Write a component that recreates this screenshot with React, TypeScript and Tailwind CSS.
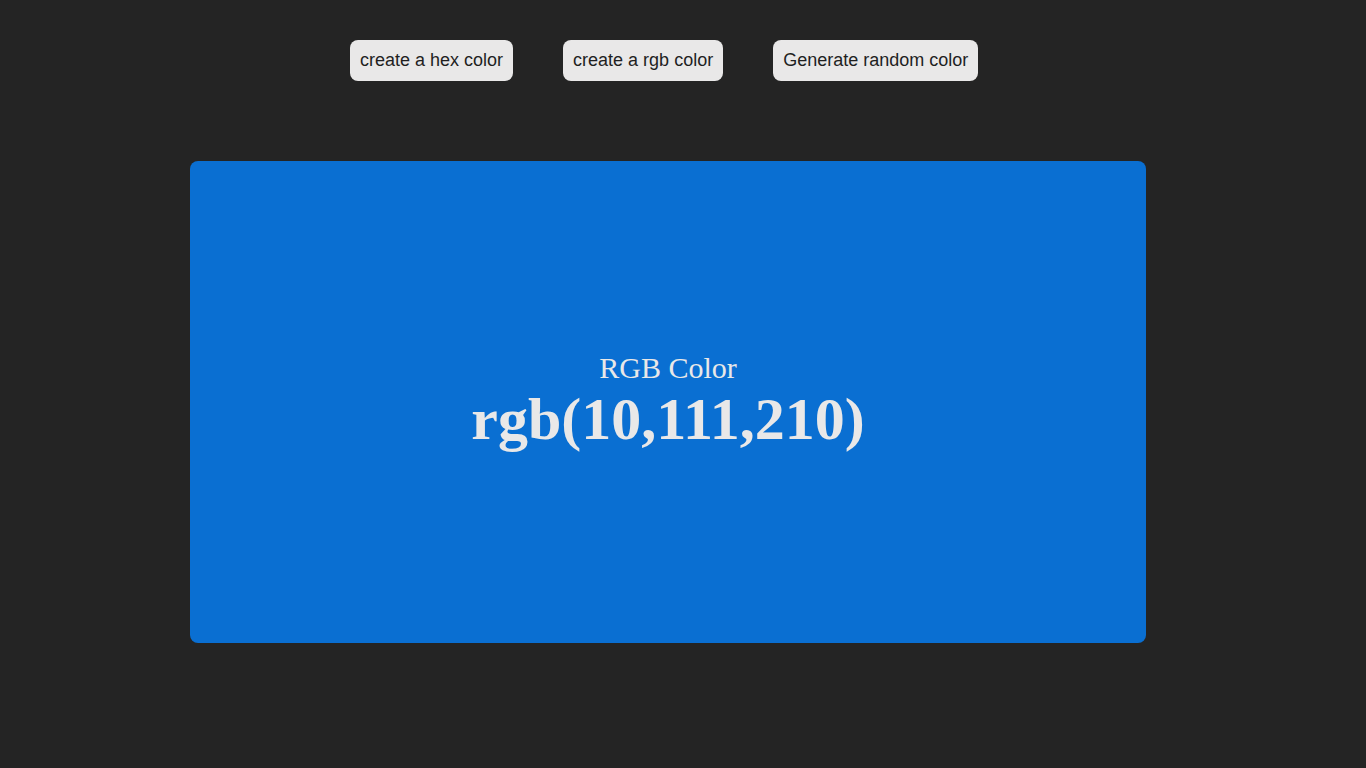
export default function App() {
  return (
    <div className="min-h-screen bg-[#242424] pt-10">
      <div className="ml-[190px] w-[956px]">
        <div className="flex gap-[50px] pl-[160px] font-['Liberation_Sans',Arial,sans-serif] text-[18px] text-[#1f1f1f]">
          <button className="h-[41px] rounded-lg bg-[#e9e8e8] px-[10px]">create a hex color</button>
          <button className="h-[41px] rounded-lg bg-[#e9e8e8] px-[10px]">create a rgb color</button>
          <button className="h-[41px] rounded-lg bg-[#e9e8e8] px-[10px]">Generate random color</button>
        </div>
        <div className="mt-20 flex h-[482px] flex-col items-center justify-center rounded-lg bg-[#0a6fd2] font-['Liberation_Serif','Times_New_Roman',serif] leading-[normal] text-[#e9e8e8]">
          <h3 className="text-[30px]">RGB Color</h3>
          <h1 className="text-[60px] font-bold">rgb(10,111,210)</h1>
        </div>
      </div>
    </div>
  )
}
